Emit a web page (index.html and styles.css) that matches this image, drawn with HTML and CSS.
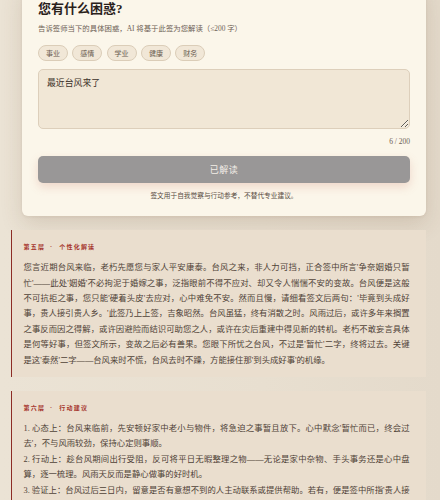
FILE: index.html
```html
<!DOCTYPE html>
<html lang="zh-CN">
<head>
<meta charset="utf-8">
<title>签文解读</title>
<link rel="stylesheet" href="styles.css">
</head>
<body>
<div class="page">
  <div class="card">
    <h2 class="title">您有什么困惑?</h2>
    <p class="subtitle">告诉签师当下的具体困惑，AI 将基于此签为您解读（≤200 字）</p>
    <div class="chips">
      <span class="chip">事业</span>
      <span class="chip">感情</span>
      <span class="chip">学业</span>
      <span class="chip">健康</span>
      <span class="chip">财务</span>
    </div>
    <textarea class="ask" rows="3">最近台风来了</textarea>
    <div class="counter">6 / 200</div>
    <button class="submit" disabled>已解读</button>
    <p class="note">签文用于自我觉察与行动参考，不替代专业建议。</p>
  </div>

  <section class="layer">
    <div class="label">第五层<span class="dot">·</span>个性化解读</div>
    <p class="body">您言近期台风来临，老朽先愿您与家人平安康泰。台风之来，非人力可挡，正合签中所言'争奈姻婚只暂忙'——此处'姻婚'不必拘泥于婚嫁之事，泛指眼前不得不应对、却又令人惴惴不安的变故。台风便是这般不可抗拒之事，您只能'硬着头皮'去应对，心中难免不安。然而且慢，请细看签文后两句：'毕竟到头成好事，贵人接引贵人乡。'此签乃上上签，吉象昭然。台风虽猛，终有消散之时。风雨过后，或许多年来搁置之事反而因之得解，或许因避险而结识可助您之人，或许在灾后重建中得见新的转机。老朽不敢妄言具体是何等好事，但签文所示，变故之后必有善果。您眼下所忧之台风，不过是'暂忙'二字，终将过去。关键是这'泰然'二字——台风来时不慌，台风去时不躁，方能接住那'到头成好事'的机缘。</p>
  </section>

  <section class="layer">
    <div class="label">第六层<span class="dot">·</span>行动建议</div>
    <div class="body">
      <p>1. 心态上：台风来临前，先安顿好家中老小与物件，将急迫之事暂且放下。心中默念'暂忙而已，终会过去'，不与风雨较劲，保持心定则事顺。</p>
      <p>2. 行动上：趁台风期间出行受阻，反可将平日无暇整理之物——无论是家中杂物、手头事务还是心中盘算，逐一梳理。风雨天反而是静心做事的好时机。</p>
      <p>3. 验证上：台风过后三日内，留意是否有意想不到的人主动联系或提供帮助。若有，便是签中所指'贵人接引'之兆，当珍惜此缘。</p>
    </div>
  </section>
</div>
</body>
</html>
```
FILE: styles.css
```css
* { box-sizing: border-box; }

html, body {
  margin: 0;
  padding: 0;
}

body {
  background: linear-gradient(90deg, #ebe3d5 0%, #e8dfd0 60%, #e4dacb 100%);
  font-family: "Liberation Serif", "Noto Sans CJK SC", serif;
  color: #4e4238;
  overflow: hidden;
}

.page {
  margin-top: -16px;
  padding: 0 14px 40px 11px;
  display: flex;
  flex-direction: column;
  gap: 14px;
}

.card {
  margin-left: 11px;
  background: #fbf6ea;
  border-radius: 6px;
  padding: 16px 16px 15px;
  box-shadow: 0 8px 22px rgba(100, 70, 40, 0.16), 0 1px 3px rgba(100, 70, 40, 0.08);
  display: flex;
  flex-direction: column;
}

.title {
  margin: 0;
  font-size: 13px;
  line-height: 17px;
  font-weight: 700;
  color: #2a211b;
}

.subtitle {
  margin: 5.5px 0 0;
  font-size: 7.4px;
  line-height: 11px;
  color: #6e6156;
}

.chips {
  margin-top: 11px;
  display: flex;
  gap: 4.3px;
}

.chip {
  height: 16.7px;
  display: inline-flex;
  align-items: center;
  padding: 0 7px;
  border: 1px solid #dbcdb8;
  border-radius: 999px;
  background: #f1e7d7;
  font-size: 7px;
  color: #6a5c50;
}

.ask {
  margin-top: 8px;
  height: 60px;
  width: 100%;
  resize: vertical;
  background: #f1e7d6;
  border: 1px solid #ddcfbb;
  border-radius: 5px;
  padding: 7px 8px;
  font-family: "Liberation Serif", "Noto Sans CJK SC", serif;
  font-size: 8.9px;
  line-height: 13.5px;
  color: #3d322a;
  outline: none;
}

.counter {
  margin-top: 7px;
  text-align: right;
  font-size: 7.5px;
  line-height: 11px;
  color: #6e6156;
}

.submit {
  margin-top: 9px;
  height: 26.5px;
  border: none;
  border-radius: 5px;
  background: #999797;
  color: #f3eee7;
  font-family: "Liberation Serif", "Noto Sans CJK SC", serif;
  font-size: 9px;
  letter-spacing: 0.5px;
  box-shadow: 0 4px 10px rgba(200, 110, 90, 0.22);
}

.note {
  margin: 8.5px 0 0;
  text-align: center;
  font-size: 6.7px;
  line-height: 10px;
  color: #5a4d43;
}

.layer {
  background: #eadece;
  border-left: 1.5px solid #8c2c25;
  padding: 13px 16.4px 9px 11.5px;
}

.label {
  font-size: 6px;
  line-height: 8px;
  font-weight: 700;
  letter-spacing: 1.2px;
  color: #a6372f;
}

.dot {
  display: inline-block;
  margin: 0 6px 0 5px;
}

.body {
  margin: 9px 0 0;
  font-size: 8.35px;
  line-height: 15.4px;
  text-align: justify;
  color: #4f4237;
}

.body p {
  margin: 0;
}
```
